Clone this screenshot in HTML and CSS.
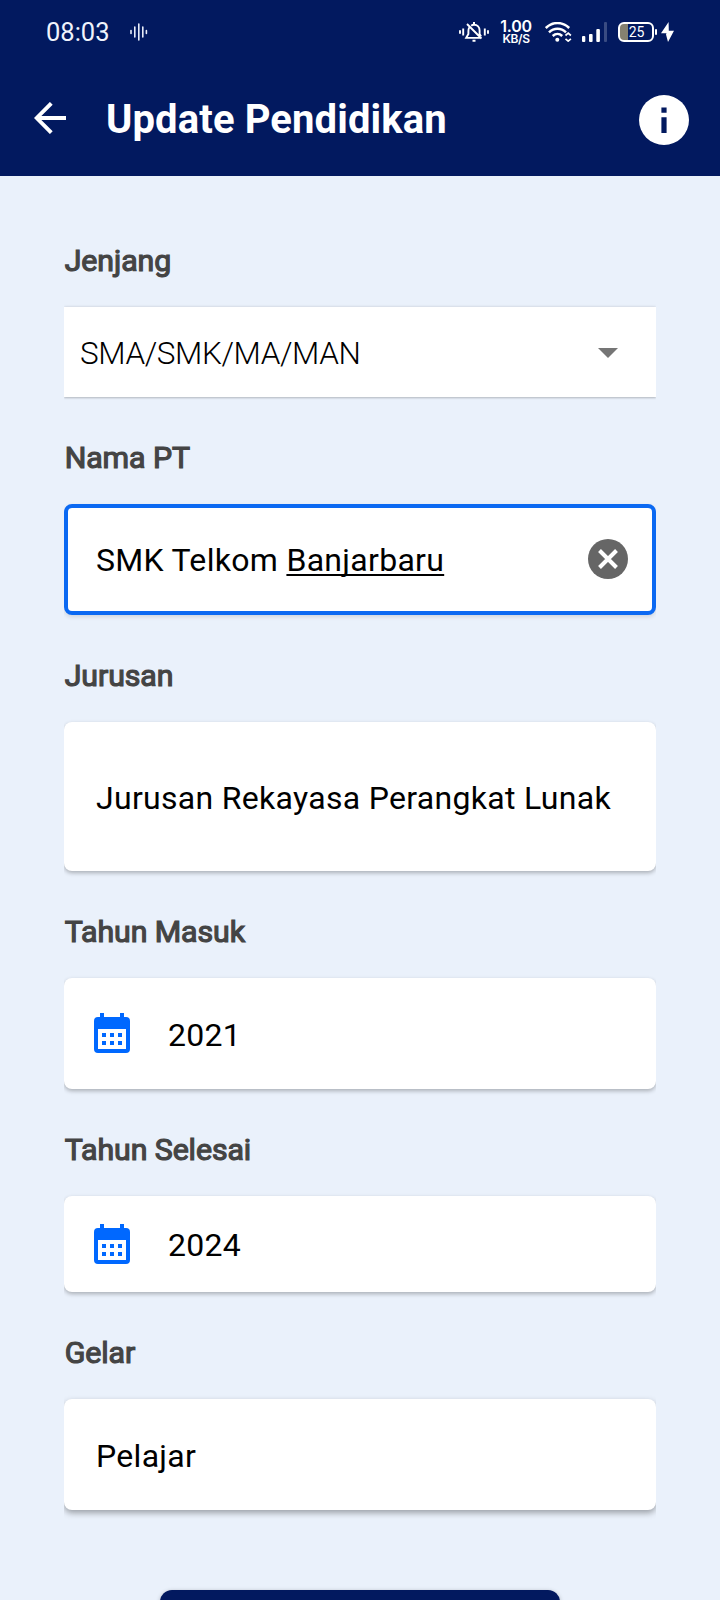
FILE: index.html
```html
<!DOCTYPE html>
<html lang="id">
<head>
<meta charset="utf-8">
<title>Update Pendidikan</title>
<link rel="stylesheet" href="styles.css">
</head>
<body>
<div class="screen">
  <header class="header">
    <div class="status">
      <span class="clock">08:03</span>
      <svg class="wave" width="18" height="18" viewBox="0 0 18 18" stroke="#e8ecf8" stroke-width="1.6" stroke-linecap="round"><path d="M1 7.500v3M4.800 4v10M8.800 1v16M12.800 4v10M16.400 7.500v3"/></svg>
      <svg class="bell" width="30" height="20" viewBox="0 0 30 20" fill="none" stroke="#fff" stroke-width="1.900"><path d="M1 8.200v3.600M4.200 6.500v7M25.800 6.500v7M29 8.200v3.600"/><path d="M10.400 5.200C9.600 6.300 9.400 7.500 9.400 9v3L7.200 15.900h15.500M12.200 3.700C13 3 13.900 2.700 15 2.700c3.400 0 5.600 2.500 5.600 5.800V12l1.500 2.500M8 2l14.500 14.500"/><path d="M14 1h2M13.500 18.700h3" stroke-width="2"/></svg>
      <span class="speed"><span class="rate">1.00</span><span class="unit">KB/S</span></span>
      <svg class="wifi" width="27" height="20" viewBox="0 0 27 20" fill="none" stroke="#fff" stroke-width="2.500"><path d="M.8 6C7.500-.6 17.500-.6 24.200 6M4 10.300c5-4.900 12-4.900 17 0M7.700 14c3-2.800 6.700-2.800 9.500 0"/><circle cx="12.300" cy="17.700" r="2" fill="#fff" stroke="none"/><path d="M20.500 13.500l2.700-2.300 2.700 2.300M20.500 16.800l2.700 2.300 2.700-2.300" stroke-width="1.700"/></svg>
      <svg class="signal" width="25" height="20" viewBox="0 0 25 20" fill="#fff"><rect y="14" width="3.300" height="6" rx="1"/><rect x="7" y="12" width="3.600" height="8" rx="1"/><rect x="14.300" y="7" width="3.600" height="13" rx="1"/><rect x="22" width="3" height="20" rx="1" opacity=".22"/></svg>
      <span class="battery"><span class="level">25</span></span>
      <svg class="bolt" width="13" height="20" viewBox="0 0 13 20" fill="#fff"><path d="M7.600 0L0 11.200h5.500L5 12.500 7 20l6-11.200H7.800z"/></svg>
    </div>
    <div class="bar">
      <svg class="back" width="32" height="32" viewBox="0 0 32 32" fill="none" stroke="#fff" stroke-width="3.900"><path d="M32 16H3M17.300 1.300L2.700 16l14.600 14.700"/></svg>
      <h1 class="title">Update Pendidikan</h1>
      <svg class="info" width="50" height="50" viewBox="0 0 50 50"><circle cx="25" cy="25" r="25" fill="#fff"/><path d="M22.400 12.500h5.200v5.200h-5.200zM22.400 22.300h5.200V38h-5.200z" fill="#02195f"/></svg>
    </div>
  </header>
  <main class="form">
    <label class="label">Jenjang</label>
    <div class="select"><span class="choice">SMA/SMK/MA/MAN</span><svg class="caret" width="20" height="10" viewBox="0 0 20 10"><path d="M0 0h20L10 10z" fill="#757575"/></svg></div>
    <label class="label">Nama PT</label>
    <div class="field focused"><span class="value">SMK Telkom <span class="composing">Banjarbaru</span></span>
      <svg class="clear" width="40" height="40" viewBox="0 0 40 40"><circle cx="20" cy="20" r="20" fill="#666"/><path d="M11.500 11.500l17 17M28.500 11.500l-17 17" stroke="#fff" stroke-width="4"/></svg></div>
    <label class="label">Jurusan</label>
    <div class="field tall">Jurusan Rekayasa Perangkat Lunak</div>
    <label class="label">Tahun Masuk</label>
    <div class="field dated"><svg class="calendar" width="36" height="40" viewBox="0 0 36 40" fill="#0068ff"><path fill-rule="evenodd" d="M6 0h4v4h16V0h4v4h2a4 4 0 0 1 4 4v28a4 4 0 0 1-4 4H4a4 4 0 0 1-4-4V8a4 4 0 0 1 4-4h2zM4 16v20h28V16z"/><path d="M8 20h4v4H8zM16 20h4v4h-4zM24 20h4v4h-4zM8 28h4v4H8zM16 28h4v4h-4zM24 28h4v4h-4z"/></svg><span>2021</span></div>
    <label class="label">Tahun Selesai</label>
    <div class="field dated short"><svg class="calendar" width="36" height="40" viewBox="0 0 36 40" fill="#0068ff"><path fill-rule="evenodd" d="M6 0h4v4h16V0h4v4h2a4 4 0 0 1 4 4v28a4 4 0 0 1-4 4H4a4 4 0 0 1-4-4V8a4 4 0 0 1 4-4h2zM4 16v20h28V16z"/><path d="M8 20h4v4H8zM16 20h4v4h-4zM24 20h4v4h-4zM8 28h4v4H8zM16 28h4v4h-4zM24 28h4v4h-4z"/></svg><span>2024</span></div>
    <label class="label">Gelar</label>
    <div class="field last">Pelajar</div>
    <div class="submit"></div>
  </main>
</div>
</body>
</html>
```
FILE: styles.css
```css
* { box-sizing: border-box; }
body { margin: 0; font-family: Roboto, "Liberation Sans", sans-serif; }
svg { display: block; flex: none; }
.screen { width: 720px; height: 1600px; overflow: hidden; background: #eaf1fb; }
.header { height: 176px; background: #02195f; color: #fff; }
.status { display: flex; align-items: center; height: 64px; padding: 0 46px 0 46px; }
.clock { width: 64px; font-size: 25.500px; line-height: 30px; color: #f0f3fc; }
.wave { margin-left: 20px; }
.bell { margin-left: auto; }
.speed { display: flex; flex-direction: column; align-items: center; width: 34px; margin-left: 10px; font-family: Inter, sans-serif; }
.rate { font-size: 16px; line-height: 13px; font-weight: 600; letter-spacing: -0.3px; }
.unit { font-size: 12px; line-height: 12px; font-weight: 600; letter-spacing: -0.4px; }
.wifi { margin-left: 12px; }
.signal { margin-left: 10px; }
.battery { position: relative; width: 36px; height: 20px; margin-left: 11px; border: 2px solid #fff; border-radius: 6px; background: linear-gradient(90deg, #858170 8.500px, transparent 8.500px); text-align: center; }
.battery::after { content: ""; position: absolute; right: -5px; top: 5px; width: 2px; height: 6px; background: #fff; border-radius: 1px; }
.level { display: block; font-size: 14px; line-height: 16px; padding-left: 1px; }
.bolt { margin-left: 7px; }
.bar { display: flex; align-items: center; height: 108px; padding: 0 31px 0 34px; }
.title { flex: 1; margin: 4px 0 0 40px; font-size: 40px; line-height: 48px; font-weight: 700; letter-spacing: 0.120px; }
.info { margin-top: 4px; }
.form { display: flex; flex-direction: column; padding: 65px 64px 0; }
.label { height: 40px; margin-bottom: 26px; padding-left: 0.700px; font-size: 30.300px; line-height: 40px; letter-spacing: -0.080px; color: #444; -webkit-text-stroke: 1.200px #444; }
.select { display: flex; align-items: center; justify-content: space-between; height: 90px; margin-bottom: 41px; padding: 2px 38px 0 16px; background: #fff; box-shadow: 0 0 3px rgba(0,0,0,.14), 0 1px 2px rgba(0,0,0,.18); clip-path: inset(-10px 0); }
.choice { font-family: Roboto, sans-serif; font-weight: 300; font-size: 31.500px; letter-spacing: -0.400px; color: #000; }
.field { display: flex; align-items: center; height: 111px; margin-bottom: 41px; padding: 2px 28px 0 32px; border-radius: 8px; background: #fff; box-shadow: 0 2px 4px rgba(0,0,0,.28); clip-path: inset(-12px 0); font-size: 32px; line-height: 40px; letter-spacing: 0.300px; color: #000; white-space: nowrap; }
.focused { justify-content: space-between; padding: 0 24px 0 28px; border: 4px solid #0b69f2; box-shadow: 0 2px 4px rgba(0,0,0,.12); }
.value { margin-top: 1px; }
.clear { margin-top: -1px; }
.composing { text-decoration: underline; text-decoration-thickness: 2px; text-underline-offset: 3px; text-decoration-skip-ink: none; }
.tall { height: 149px; }
.dated { gap: 38px; padding-left: 30px; }
.calendar { margin-top: -4px; }
.short { height: 96px; }
.short .calendar { margin-top: -2px; }
.last { margin-bottom: 80px; box-shadow: 0 3px 6px rgba(0,0,0,.34); }
.submit { align-self: center; width: 400px; height: 88px; border-radius: 12px; background: #02195f; box-shadow: 0 1px 4px rgba(0,0,0,.25); }
```
